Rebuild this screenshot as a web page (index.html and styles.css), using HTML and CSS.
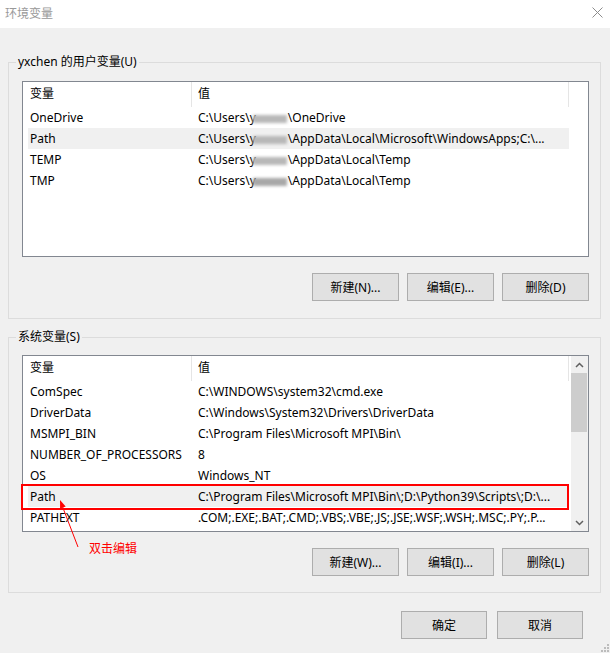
FILE: index.html
```html
<!DOCTYPE html>
<html>
<head>
    <title>环境变量</title>
    <link rel="stylesheet" href="styles.css">
</head>
<body>
    <div class="titlebar">
        <span class="title">环境变量</span>
        <svg class="close" width="11" height="11" viewBox="0 0 11 11"><path d="M0.5 0.5L10.5 10.5M10.5 0.5L0.5 10.5" stroke="#8c8c8c" stroke-width="1" fill="none"/></svg>
    </div>

    <div class="content">
        <fieldset class="group group-user">
            <legend>yxchen 的用户变量(U)</legend>
            <div class="list list-user">
                <div class="list-main">
                    <div class="list-head">
                        <div class="c1">变量</div>
                        <div class="c2">值</div>
                    </div>
                    <div class="row"><div class="c1">OneDrive</div><div class="c2">C:\Users\y<span class="smudge"></span>\OneDrive</div></div>
                    <div class="row hot"><div class="c1">Path</div><div class="c2">C:\Users\y<span class="smudge"></span>\AppData\Local\Microsoft\WindowsApps;C:\...</div></div>
                    <div class="row"><div class="c1">TEMP</div><div class="c2">C:\Users\y<span class="smudge"></span>\AppData\Local\Temp</div></div>
                    <div class="row"><div class="c1">TMP</div><div class="c2">C:\Users\y<span class="smudge dark"></span>\AppData\Local\Temp</div></div>
                </div>
            </div>
            <div class="buttons">
                <button class="button">新建(N)...</button>
                <button class="button">编辑(E)...</button>
                <button class="button">删除(D)</button>
            </div>
        </fieldset>

        <fieldset class="group group-system">
            <legend>系统变量(S)</legend>
            <div class="list-wrap">
                <div class="list list-system">
                    <div class="list-main">
                        <div class="list-head">
                            <div class="c1">变量</div>
                            <div class="c2">值</div>
                        </div>
                        <div class="row"><div class="c1">ComSpec</div><div class="c2">C:\WINDOWS\system32\cmd.exe</div></div>
                        <div class="row"><div class="c1">DriverData</div><div class="c2">C:\Windows\System32\Drivers\DriverData</div></div>
                        <div class="row"><div class="c1">MSMPI_BIN</div><div class="c2">C:\Program Files\Microsoft MPI\Bin\</div></div>
                        <div class="row"><div class="c1">NUMBER_OF_PROCESSORS</div><div class="c2">8</div></div>
                        <div class="row"><div class="c1">OS</div><div class="c2">Windows_NT</div></div>
                        <div class="row hot"><div class="c1">Path</div><div class="c2">C:\Program Files\Microsoft MPI\Bin\;D:\Python39\Scripts\;D:\...</div></div>
                        <div class="row"><div class="c1">PATHEXT</div><div class="c2">.COM;.EXE;.BAT;.CMD;.VBS;.VBE;.JS;.JSE;.WSF;.WSH;.MSC;.PY;.P...</div></div>
                    </div>
                    <div class="scrollbar">
                        <div class="sb-btn">
                            <svg width="9" height="6" viewBox="0 0 9 6"><path d="M1 5L4.5 1.5L8 5" stroke="#606060" stroke-width="1.5" fill="none"/></svg>
                        </div>
                        <div class="sb-thumb"></div>
                        <div class="sb-track"></div>
                        <div class="sb-btn">
                            <svg width="9" height="6" viewBox="0 0 9 6"><path d="M1 1L4.5 4.5L8 1" stroke="#606060" stroke-width="1.5" fill="none"/></svg>
                        </div>
                    </div>
                </div>
                <!-- marca roja sobre la fila Path -->
                <div class="mark"></div>
            </div>
            <div class="buttons">
                <button class="button">新建(W)...</button>
                <button class="button">编辑(I)...</button>
                <button class="button">删除(L)</button>
            </div>
        </fieldset>

        <div class="footer">
            <button class="button">确定</button>
            <button class="button">取消</button>
        </div>
    </div>

    <!-- anotacion: flecha + texto -->
    <svg class="note-arrow" width="30" height="60" viewBox="0 0 30 60">
        <path d="M23 52L6.5 9" stroke="#ff0000" stroke-width="1" fill="none"/>
        <path d="M5 5L10.7 11.4L5.1 13.5Z" fill="#ff0000"/>
    </svg>
    <span class="note-text">双击编辑</span>

    <svg class="grip" width="8" height="8" viewBox="0 0 8 8">
        <rect x="6" y="0" width="2" height="2" fill="#bcbcbc"/>
        <rect x="3" y="3" width="2" height="2" fill="#bcbcbc"/>
        <rect x="6" y="3" width="2" height="2" fill="#bcbcbc"/>
        <rect x="0" y="6" width="2" height="2" fill="#bcbcbc"/>
        <rect x="3" y="6" width="2" height="2" fill="#bcbcbc"/>
        <rect x="6" y="6" width="2" height="2" fill="#bcbcbc"/>
    </svg>
</body>
</html>
```

FILE: styles.css
```css
html, body {
    margin: 0;
    height: 100%;
}
body {
    position: relative;
    background-color: #f0f0f0;
    font-family: "Noto Sans", "Noto Sans CJK SC", sans-serif;
    font-size: 12px;
    color: #000;
    overflow: hidden;
}
.titlebar {
    height: 28px;
    background-color: #fff;
    display: flex;
    align-items: center;
    justify-content: space-between;
    padding: 0 7px 0 5px;
}
.title {
    color: #999;
    font-family: "Noto Sans CJK SC", sans-serif;
    font-size: 12px;
    line-height: 16px;
    margin-top: -3px;
}
.close {
    display: block;
    margin-top: -4px;
}
.content {
    padding: 26px 9px 0 8px;
}
.group {
    margin: 0;
    min-width: 0;
    border: 1px solid #dcdcdc;
    padding: 11px 11px 17px 13px;
}
.group legend {
    margin-left: -6px;
    padding: 0 2px;
    line-height: 16px;
}
.group-system {
    margin-top: 10px;
    padding-top: 10px;
    padding-bottom: 16px;
}
.list {
    display: flex;
    background-color: #fff;
    border: 1px solid #828790;
    overflow: hidden;
}
.list-user { height: 174px; }
.list-system { height: 175px; }
.list-wrap {
    position: relative;
}
.list-main {
    flex: 1;
    min-width: 0;
    overflow: hidden;
}
.list-head, .row {
    display: flex;
    width: 541px;
    margin-left: 5px;
}
.list-head {
    height: 25px;
    line-height: 24px;
}
.list-head .c1, .list-head .c2 {
    border-right: 1px solid #e5e5e5;
}
.row {
    height: 21px;
    line-height: 21px;
}
.row.hot {
    background-color: #f0f0f0;
}
.c1 {
    width: 164px;
    flex: none;
    box-sizing: border-box;
    padding-left: 2px;
    white-space: nowrap;
    overflow: hidden;
}
.c2 {
    flex: 1;
    min-width: 0;
    padding-left: 6px;
    white-space: nowrap;
    overflow: hidden;
}
.smudge {
    display: inline-block;
    width: 34px;
    height: 8px;
    margin: 0 1px 0 -3px;
    vertical-align: -1px;
    background-color: #b8b8b8;
    filter: blur(1.5px);
}
.smudge.dark { background-color: #a8a8a8; }
.scrollbar {
    width: 17px;
    flex: none;
    display: flex;
    flex-direction: column;
    background-color: #f0f0f0;
}
.sb-btn {
    height: 17px;
    display: flex;
    align-items: center;
    justify-content: center;
}
.sb-thumb {
    height: 59px;
    background-color: #cdcdcd;
    margin-right: 1px;
}
.sb-track { flex: 1; }
.mark {
    position: absolute;
    left: -1px;
    top: 129px;
    width: 548px;
    height: 26px;
    box-sizing: border-box;
    border: 2px solid #ff0000;
}
.buttons {
    display: flex;
    justify-content: flex-end;
    gap: 8px;
    margin-top: 16px;
}
.button {
    width: 87px;
    height: 28px;
    padding: 0;
    font-family: "Noto Sans", "Noto Sans CJK SC", sans-serif;
    font-size: 12px;
    color: #000;
    background-color: #e1e1e1;
    border: 1px solid #adadad;
}
.footer {
    display: flex;
    justify-content: flex-end;
    gap: 10px;
    margin-top: 18px;
    padding-right: 18px;
}
.footer .button { width: 86px; }
.note-arrow {
    position: absolute;
    left: 55px;
    top: 495px;
}
.note-text {
    position: absolute;
    left: 89px;
    top: 539px;
    color: #ff0000;
    font-family: "Noto Sans CJK SC", sans-serif;
    line-height: 18px;
}
.grip {
    position: absolute;
    right: 1px;
    bottom: 1px;
}
```
